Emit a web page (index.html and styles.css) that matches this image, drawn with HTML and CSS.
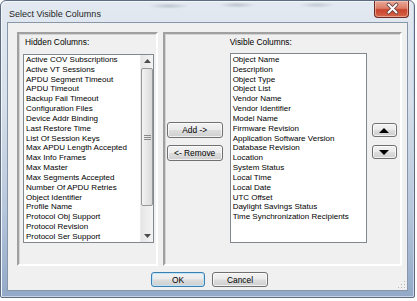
FILE: index.html
```html
<!DOCTYPE html>
<html lang="en">
<head>
  <meta charset="UTF-8" />
  <title>Select Visible Columns</title>
  <link rel="stylesheet" href="styles.css">
</head>
<body>
  <div class="window">
    <div class="titlebar">
      <span class="title">Select Visible Columns</span>
      <div class="close">
        <svg width="35" height="17" viewBox="0 0 35 17">
          <path d="M13.5 4.5 L21.5 12.5 M21.5 4.5 L13.5 12.5" stroke="#5a3a36" stroke-width="3.6" stroke-linecap="round"/>
          <path d="M13.5 4.5 L21.5 12.5 M21.5 4.5 L13.5 12.5" stroke="#ffffff" stroke-width="2" stroke-linecap="round"/>
        </svg>
      </div>
    </div>

    <div class="client">
      <div class="panes">
        <div class="pane pane-left">
          <div class="label">Hidden Columns:</div>
          <div class="listbox listbox-hidden">
            <ul class="items">
              <li>Active COV Subscriptions</li>
              <li>Active VT Sessions</li>
              <li>APDU Segment Timeout</li>
              <li>APDU Timeout</li>
              <li>Backup Fail Timeout</li>
              <li>Configuration Files</li>
              <li>Device Addr Binding</li>
              <li>Last Restore Time</li>
              <li>List Of Session Keys</li>
              <li>Max APDU Length Accepted</li>
              <li>Max Info Frames</li>
              <li>Max Master</li>
              <li>Max Segments Accepted</li>
              <li>Number Of APDU Retries</li>
              <li>Object Identifier</li>
              <li>Profile Name</li>
              <li>Protocol Obj Support</li>
              <li>Protocol Revision</li>
              <li>Protocol Ser Support</li>
            </ul>
            <div class="scrollbar">
              <div class="sb-arrow">
                <svg width="7" height="4" viewBox="0 0 7 4"><path d="M0 4 L3.5 0 L7 4 Z" fill="#4d4d4d"/></svg>
              </div>
              <div class="sb-thumb">
                <svg width="7" height="5" viewBox="0 0 7 5">
                  <path d="M0 0.5 H7 M0 2.5 H7 M0 4.5 H7" stroke="#8a8a8a" stroke-width="1"/>
                </svg>
              </div>
              <div class="sb-track"></div>
              <div class="sb-arrow">
                <svg width="7" height="4" viewBox="0 0 7 4"><path d="M0 0 L7 0 L3.5 4 Z" fill="#4d4d4d"/></svg>
              </div>
            </div>
          </div>
        </div>

        <div class="pane pane-right">
          <div class="move-buttons">
            <button class="btn btn-move">Add -&gt;</button>
            <button class="btn btn-move">&lt;- Remove</button>
          </div>
          <div class="visible-col">
            <div class="label">Visible Columns:</div>
            <div class="listbox listbox-visible">
              <ul class="items">
                <li>Object Name</li>
                <li>Description</li>
                <li>Object Type</li>
                <li>Object List</li>
                <li>Vendor Name</li>
                <li>Vendor Identifier</li>
                <li>Model Name</li>
                <li>Firmware Revision</li>
                <li>Application Software Version</li>
                <li>Database Revision</li>
                <li>Location</li>
                <li>System Status</li>
                <li>Local Time</li>
                <li>Local Date</li>
                <li>UTC Offset</li>
                <li>Daylight Savings Status</li>
                <li>Time Synchronization Recipients</li>
              </ul>
            </div>
          </div>
          <div class="order-buttons">
            <button class="btn btn-order">
              <svg width="10" height="5" viewBox="0 0 10 5"><path d="M0 5 L5 0 L10 5 Z" fill="#000"/></svg>
            </button>
            <button class="btn btn-order">
              <svg width="10" height="5" viewBox="0 0 10 5"><path d="M0 0 L10 0 L5 5 Z" fill="#000"/></svg>
            </button>
          </div>
        </div>
      </div>

      <div class="actions">
        <button class="btn btn-default">OK</button>
        <button class="btn btn-cancel">Cancel</button>
      </div>

      <svg class="grip" width="9" height="9" viewBox="0 0 9 9">
        <rect x="7" y="1" width="1" height="1" fill="#b8b8b8"/>
        <rect x="4" y="4" width="1" height="1" fill="#b8b8b8"/>
        <rect x="7" y="4" width="1" height="1" fill="#b8b8b8"/>
        <rect x="1" y="7" width="1" height="1" fill="#b8b8b8"/>
        <rect x="4" y="7" width="1" height="1" fill="#b8b8b8"/>
        <rect x="7" y="7" width="1" height="1" fill="#b8b8b8"/>
      </svg>
    </div>
  </div>
</body>
</html>
```

FILE: styles.css
```css
* {
  box-sizing: border-box;
}

body {
  margin: 0;
  background: #ffffff;
  font-family: "Liberation Sans", Arial, sans-serif;
  color: #000;
}

/* window frame */
.window {
  width: 415px;
  height: 298px;
  border: 1px solid #5d6c80;
  border-radius: 6px 6px 2px 2px;
  padding: 0 6px 6px 6px;
  display: flex;
  flex-direction: column;
  background: linear-gradient(to bottom, #e2e9f1 0%, #d6dfea 35%, #b7c7dc 70%, #92a9c7 100%);
  box-shadow: inset 1px 1px 0 #f4f7fa, inset -1px -1px 0 #c8d4e3;
}

.titlebar {
  height: 21px;
  display: flex;
  align-items: flex-start;
  margin: 0 -6px;
  padding: 0 0 0 7px;
  background:
    radial-gradient(ellipse 20px 3px at 168px 5px, rgba(120, 130, 145, 0.35), transparent),
    radial-gradient(ellipse 18px 3px at 236px 4px, rgba(120, 130, 145, 0.35), transparent),
    radial-gradient(ellipse 18px 3px at 316px 4px, rgba(120, 130, 145, 0.3), transparent);
}

.title {
  font-size: 9px;
  line-height: 11px;
  padding-top: 8px;
  padding-left: 1px;
  color: #1e1e1e;
}

.close {
  margin-left: auto;
  margin-right: 5px;
  width: 35px;
  height: 17px;
  border: 1px solid #6b2b22;
  border-top: none;
  border-radius: 0 0 4px 4px;
  background: linear-gradient(to bottom, #e9a898 0%, #db7e68 45%, #c8442c 55%, #d5654a 100%);
  box-shadow: inset 0 0 0 1px rgba(255, 220, 210, 0.5);
}

.close svg {
  display: block;
  margin-top: -1px;
}

/* client area */
.client {
  flex: 1;
  position: relative;
  background: #f0f0f0;
  border: 1px solid #8896aa;
  padding: 9px 5px 0 9px;
  display: flex;
  flex-direction: column;
}

.panes {
  display: flex;
  gap: 5px;
  height: 234px;
}

.pane {
  border: 2px solid;
  border-color: #a0a0a0 #ffffff #ffffff #a0a0a0;
  box-shadow: inset 1px 1px 0 #d4d4d4;
}

.pane-left {
  width: 141px;
  padding: 0 0 0 4px;
}

.pane-right {
  width: 240px;
  padding: 0 0 0 2px;
  display: flex;
  align-items: flex-start;
}

.label {
  font-size: 8.4px;
  line-height: 11px;
  padding-top: 3px;
}

.pane-left .label {
  padding-left: 2px;
}

.listbox {
  background: #ffffff;
  border: 1px solid #828790;
  overflow: hidden;
}

.listbox-hidden {
  width: 131px;
  height: 189px;
  margin-top: 6px;
  display: flex;
}

.listbox-visible {
  width: 137px;
  height: 190px;
  margin-top: 5px;
}

.items {
  list-style: none;
  margin: 0;
  padding: 0 0 0 2px;
  font-size: 8px;
  line-height: 9.83px;
  white-space: nowrap;
  flex: 1;
}

.listbox-visible .items {
  padding-top: 1px;
}

/* scrollbar */
.scrollbar {
  width: 13px;
  display: flex;
  flex-direction: column;
  background: linear-gradient(to right, #e6e6e6, #f4f4f4);
  border-left: 1px solid #ececec;
}

.sb-arrow {
  height: 12px;
  display: flex;
  align-items: center;
  justify-content: center;
}

.sb-thumb {
  height: 138px;
  margin: 1px 0 0 0;
  border: 1px solid #979797;
  border-radius: 2px;
  background: linear-gradient(to right, #f2f2f2 0%, #e7e7e7 50%, #d9d9d9 100%);
  display: flex;
  align-items: center;
  justify-content: center;
}

.sb-track {
  flex: 1;
}

/* buttons */
.btn {
  font-family: "Liberation Sans", Arial, sans-serif;
  font-size: 8.4px;
  color: #000;
  padding: 0;
  border: 1px solid #707070;
  border-radius: 3px;
  background: linear-gradient(to bottom, #f2f2f2 0%, #ebebeb 48%, #dddddd 52%, #cfcfcf 100%);
  box-shadow: inset 0 0 0 1px rgba(255, 255, 255, 0.7);
  display: flex;
  align-items: center;
  justify-content: center;
}

.move-buttons {
  display: flex;
  flex-direction: column;
  gap: 7px;
  margin-top: 88px;
}

.btn-move {
  width: 56px;
  height: 16px;
}

.visible-col {
  margin-left: 7px;
}

.order-buttons {
  display: flex;
  flex-direction: column;
  gap: 8px;
  margin: 89px 0 0 5px;
}

.btn-order {
  width: 25px;
  height: 14px;
}

.actions {
  display: flex;
  gap: 7px;
  margin: 6px 0 0 134px;
}

.btn-default {
  width: 54px;
  height: 15px;
  border-color: #3c7fb1;
  box-shadow: inset 0 0 0 1px #bfe3f7;
}

.btn-cancel {
  width: 56px;
  height: 15px;
}

.grip {
  position: absolute;
  right: 1px;
  bottom: 1px;
}
```
